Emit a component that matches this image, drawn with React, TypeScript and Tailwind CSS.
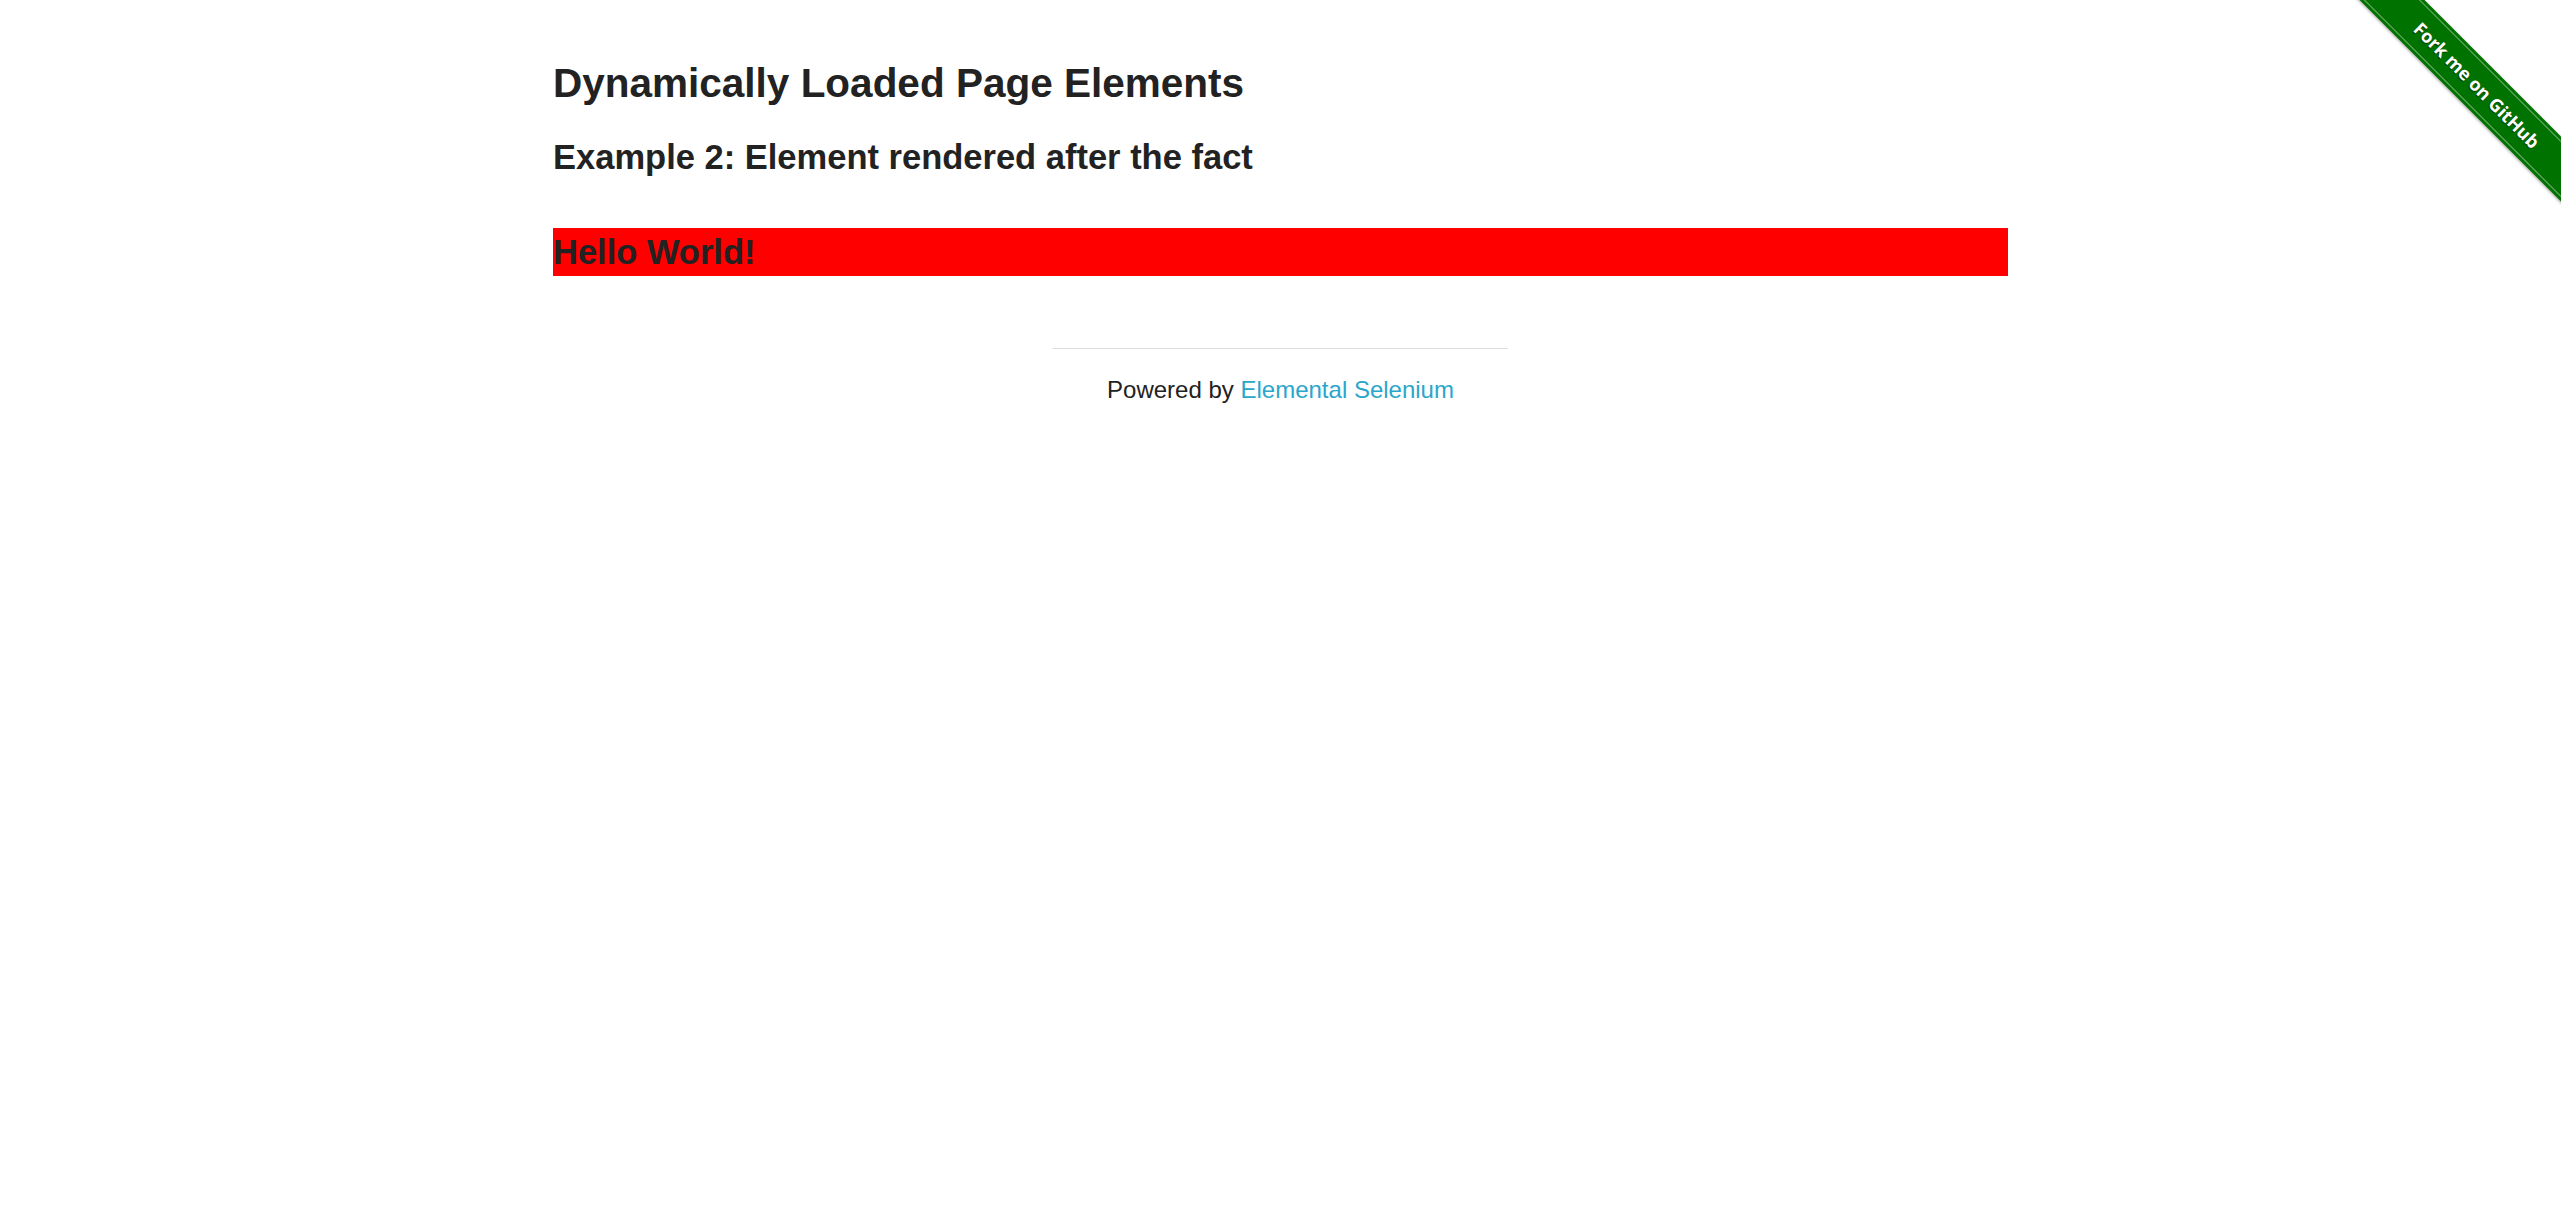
import React from "react";

export default function App() {
  return (
    <div
      className="relative min-h-[1209px] w-full overflow-hidden bg-white text-[#222222]"
      style={{ fontFamily: '"Liberation Sans", Arial, Helvetica, sans-serif' }}
    >
      <div className="mx-auto w-[1500px] px-[22.5px] pt-[55px]">
        <h3 className="m-0 mb-[21px] text-[40.5px] font-bold leading-[57px]">
          Dynamically Loaded Page Elements
        </h3>
        <h4 className="m-0 text-[34.5px] font-bold leading-[48px]">
          Example 2: Element rendered after the fact
        </h4>
        <div className="mt-[47px] h-[48px] bg-[#ff0000]">
          <h4 className="m-0 text-[34.5px] font-bold leading-[48px]">Hello World!</h4>
        </div>
      </div>

      <div className="mx-auto mt-[72px] w-[500px] px-[22.5px]">
        <div className="h-px bg-[#dddddd]" />
        <div className="mt-[23px] text-center text-[24px] leading-[36px]">
          Powered by{" "}
          <a href="#" className="text-[#2ba6cb] no-underline">
            Elemental Selenium
          </a>
        </div>
      </div>

      <div className="absolute right-0 top-0 h-[224px] w-[224px] overflow-hidden">
        <div
          className="absolute left-[-20px] top-[62px] flex h-[46px] w-[320px] rotate-45 items-center bg-[#007200] py-[3px] shadow-[0_1px_3px_rgba(0,0,0,0.35)]"
        >
          <div className="flex h-full w-full items-center justify-center border-y border-[#6fb06f]">
            <span
              className="text-[18px] font-bold text-white"
              style={{ textShadow: "0 1px 1px rgba(0,0,0,0.6)", fontFamily: '"Open Sans", "Liberation Sans", sans-serif' }}
            >
              Fork me on GitHub
            </span>
          </div>
        </div>
      </div>
    </div>
  );
}
